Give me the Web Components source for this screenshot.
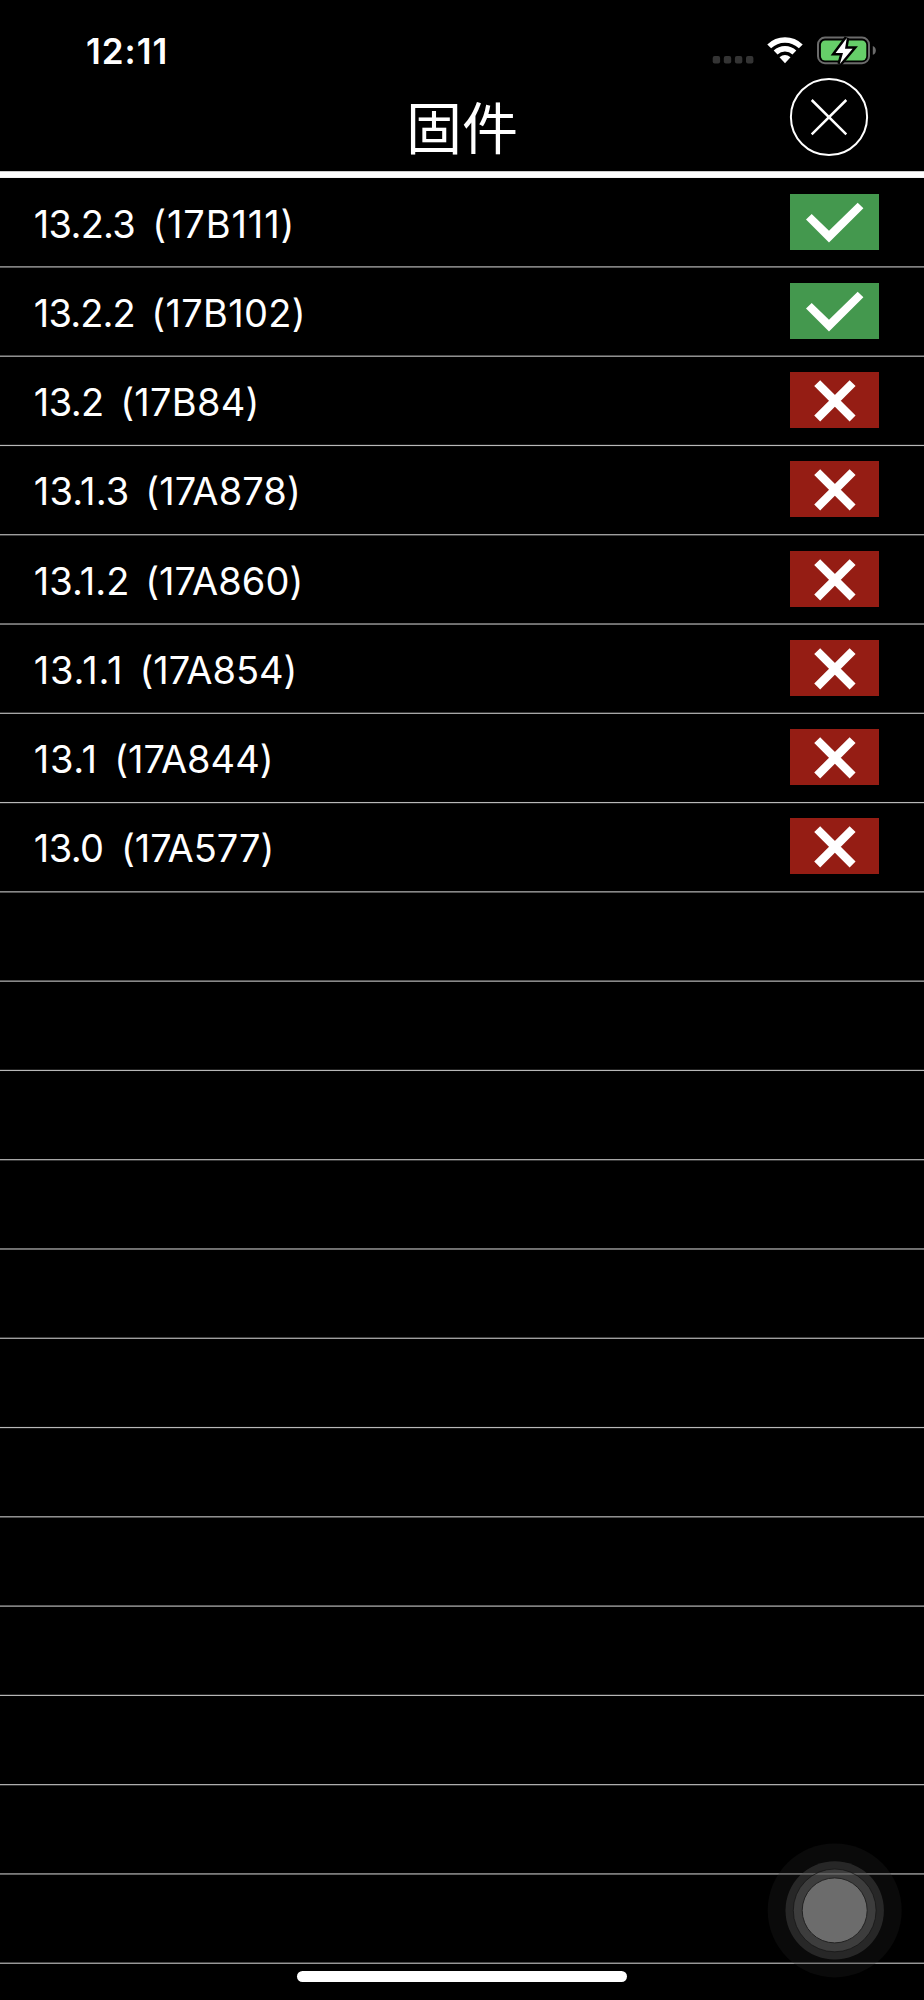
<!DOCTYPE html>
<html lang="zh">
<head>
<meta charset="utf-8">
<title>固件</title>
<style>
html, body { margin: 0; background: #000; }
body { width: 924px; height: 2000px; overflow: hidden; }
</style>
</head>
<body>
<firmware-screen></firmware-screen>
<script>
const define = (name, html, setup) => customElements.define(name, class extends HTMLElement {
  constructor() {
    super();
    this.attachShadow({ mode: 'open' });
  }
  connectedCallback() {
    const t = document.createElement('template');
    t.innerHTML = typeof html === 'function' ? html(this) : html;
    this.shadowRoot.replaceChildren(t.content.cloneNode(true));
    if (setup) setup(this);
  }
});

define('status-bar', `
<style>
:host { display: flex; justify-content: space-between; height: 76px; padding: 0 44px 0 86px; box-sizing: border-box; }
time { font: 600 35px/42px Inter, sans-serif; letter-spacing: 1px; margin-top: 30px; }
svg { display: block; }
</style>
<time>12:11</time>
<svg width="190" height="76" viewBox="690 0 190 76">
  <g fill="#343434">
    <rect x="712.7" y="56" width="7.4" height="7.4" rx="2"/><rect x="723.8" y="56" width="7.4" height="7.4" rx="2"/>
    <rect x="734.9" y="56" width="7.4" height="7.4" rx="2"/><rect x="746" y="56" width="7.4" height="7.4" rx="2"/>
  </g>
  <g fill="none" stroke="#fff" stroke-width="5.5">
    <path d="M769.2 46.4A22.6 22.6 0 0 1 800.8 46.4"/>
    <path d="M775.6 52.6A13.6 13.6 0 0 1 794.4 52.6"/>
  </g>
  <path d="M779.5 57.2Q785 52.6 790.5 57.2L785 63.3Z" fill="#fff"/>
  <rect x="818" y="37.6" width="51" height="25.6" rx="7" fill="none" stroke="#6b6b6b" stroke-width="2"/>
  <rect x="820.9" y="40.5" width="45.4" height="19.9" rx="4.3" fill="#66ce69"/>
  <path d="M872.8 46q3 1.2 3 4.4t-3 4.4z" fill="#6b6b6b"/>
  <path d="M846.8 38L835.6 53H843L839.8 64L852.6 48.7H845Z" fill="#fff" stroke="#000" stroke-width="5" paint-order="stroke"/>
</svg>`);

define('close-button', `
<style>:host { display: block; width: 80px; height: 80px; } svg { display: block; }</style>
<svg width="80" height="80" viewBox="0 0 80 80" fill="none" stroke="#fff">
  <circle cx="40" cy="40" r="38.1" stroke-width="2"/>
  <path d="M22.7 23L57.3 57.4M57.3 23L22.7 57.4" stroke-width="2.5"/>
</svg>`);

define('title-bar', `
<style>
:host { display: grid; grid-template-columns: 1fr auto 1fr; height: 95px; }
h1 { grid-column: 2; margin: 9px 0 0; font: 400 56px/80px "Noto Sans CJK SC", sans-serif; }
close-button { justify-self: end; margin: 1px 55px 0 0; }
</style>
<h1><slot></slot></h1><close-button></close-button>`);

define('sign-badge', el => `
<style>:host { display: block; width: 89px; height: 56px; } svg { display: block; }</style>
<svg width="89" height="56" viewBox="0 0 89 56"><rect width="89" height="56" fill="${el.hasAttribute('signed') ? '#44984e' : '#951d14'}"/>${el.hasAttribute('signed')
  ? '<path d="M16 25.5L21.7 20L39 36.8L67.7 8.7L73.4 14.3L39 48.4Z" fill="#fff"/>'
  : '<path d="M27.2 11.1L62.6 46.5M62.6 11.1L27.2 46.5" stroke="#fff" stroke-width="8.4"/>'}</svg>`);

define('firmware-row', `
<style>
:host { display: flex; align-items: center; justify-content: space-between; padding: 0 45px 0 0; box-sizing: border-box; min-height: 0; }
.name { display: flex; font: 380 38px/46px Inter, sans-serif; white-space: pre; margin-top: 3px; }
::slotted(sign-badge) { margin-top: -1px; }
</style>
<div class="name"><span></span><span></span></div><slot name="badge"></slot>`, el => {
  // Tracks each run so that its visible glyphs span the given left and right edges.
  const ctx = document.createElement('canvas').getContext('2d');
  ctx.font = '380 38px Inter, sans-serif';
  const [x1, x2, x3, x4] = el.getAttribute('span').split(' ').map(Number);
  const runs = [[el.getAttribute('version'), x1, x2], [`(${el.getAttribute('build')})`, x3, x4]];
  let pen = 0;
  el.shadowRoot.querySelectorAll('.name span').forEach((s, i) => {
    const [text, right, to] = runs[i];
    const from = right - 0.8;
    const m = ctx.measureText(text);
    const left = m.actualBoundingBoxLeft;
    const ink = m.actualBoundingBoxRight + left;
    const gap = (to - from - ink) / (text.length - 1);
    const start = from + left;
    s.textContent = text;
    s.style.letterSpacing = gap + 'px';
    s.style.marginLeft = (start - pen) + 'px';
    pen = start + m.width + gap * text.length;
  });
});

define('firmware-list', `
<style>
:host { display: grid; height: 1829px; grid-template: 1829px / 924px; }
svg, .rows { grid-area: 1 / 1; }
.rows { display: grid; grid-auto-rows: 89.28px; }
</style>
<svg width="924" height="1829" viewBox="0 171 924 1829"></svg>
<div class="rows"></div>`, el => {
  const data = [
    ['13.2.3', '17B111', 1, '35.6 134.3 157 290.6'], ['13.2.2', '17B102', 1, '35.6 133.6 156 301.8'],
    ['13.2', '17B84', 0, '35.6 102 125 255.6'], ['13.1.3', '17A878', 0, '35.6 127.8 150 297'],
    ['13.1.2', '17A860', 0, '35.6 127.3 150 299.5'], ['13.1.1', '17A854', 0, '35.6 120 144.2 293.6'],
    ['13.1', '17A844', 0, '35.6 94.5 119 269.7'], ['13.0', '17A577', 0, '35.6 102 125.7 270.6']
  ];
  let lines = '<rect x="0" y="171.2" width="924" height="6.75" fill="#fff"/>';
  for (let i = 0; i < 20; i++)
    lines += `<rect x="0" y="${266.3 + i * 89.28}" width="924" height="1.2" fill="#b8b8b8"/>`;
  el.shadowRoot.querySelector('svg').innerHTML = lines;
  const rows = el.shadowRoot.querySelector('.rows');
  rows.style.paddingTop = '6.4px';
  rows.innerHTML = data.map(([v, b, s, span]) =>
    `<firmware-row version="${v}" build="${b}" span="${span}"><sign-badge slot="badge"${s ? ' signed' : ''}></sign-badge></firmware-row>`).join('');
});

define('assistive-touch', `
<style>:host { display: block; width: 136px; height: 136px; } svg { display: block; }</style>
<svg width="136" height="136" viewBox="767 1842 136 136">
  <g transform="translate(834.7 1910.4)">
    <circle r="67" fill="#282828" fill-opacity=".25"/>
    <circle r="49.2" fill="#505050" fill-opacity=".42"/>
    <circle r="41.4" fill="#707070" fill-opacity=".3" stroke="#111" stroke-opacity=".65"/>
    <circle r="32.5" fill="#6c6c6c" stroke="#222" stroke-width="1"/>
  </g>
</svg>`);

define('home-indicator', `<style>:host { display: block; width: 330px; height: 11px; border-radius: 5.5px; background: #fff; }</style>`);

define('firmware-screen', `
<style>
:host { display: flex; flex-direction: column; position: relative; width: 924px; height: 2000px; background: #000; color: #fff; overflow: hidden; }
assistive-touch { position: absolute; right: 21px; bottom: 22px; }
home-indicator { position: absolute; left: 297px; bottom: 18px; }
</style>
<status-bar></status-bar>
<title-bar>固件</title-bar>
<firmware-list></firmware-list>
<assistive-touch></assistive-touch>
<home-indicator></home-indicator>`);
</script>
</body>
</html>
